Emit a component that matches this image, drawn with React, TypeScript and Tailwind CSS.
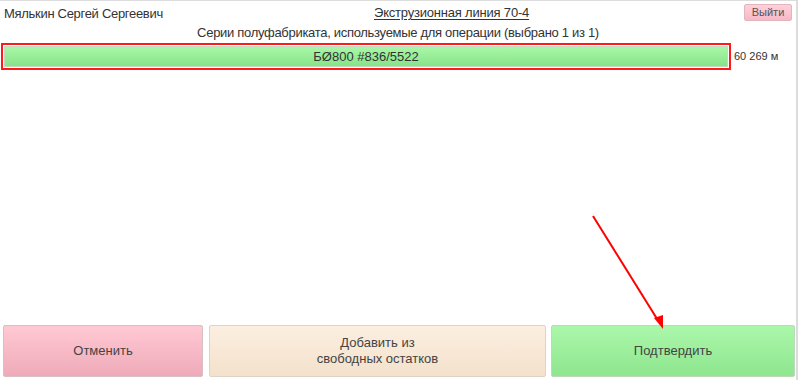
import React from "react";

export default function App() {
  return (
    <div
      className="relative w-[800px] h-[380px] bg-white overflow-hidden text-[#333]"
      style={{ fontFamily: '"Liberation Sans", Arial, sans-serif' }}
    >
      <div className="w-[798px] h-[380px] border-t border-r-2 border-[#dcdcdc] flex flex-col">
        {/* header */}
        <div className="relative h-[24px] flex items-center">
          <div className="pl-[4px] text-[13px] leading-none tracking-[-0.3px]">Мялькин Сергей Сергеевич</div>
          <div className="absolute left-[374px] top-[5px] text-[13px] leading-none tracking-[-0.2px] underline underline-offset-2">
            Экструзионная линия 70-4
          </div>
          <button className="absolute right-[4px] top-[3px] w-[48px] h-[17px] rounded-[2px] border border-[#e3b6be] bg-gradient-to-b from-[#ffd0da] to-[#f6b8c6] text-[11px] leading-none text-[#555]">
            Выйти
          </button>
        </div>
        <div className="h-[18px] text-center text-[13px] leading-[18px] -mt-[1px] tracking-[-0.3px]">
          Серии полуфабриката, используемые для операции (выбрано 1 из 1)
        </div>
        <div className="mt-[1px] flex items-center">
          <div className="ml-[1px] w-[730px] h-[27px] border-2 border-[#ff1a1a] p-[1px]">
            <div className="h-full border border-[#c2d8c2] bg-gradient-to-b from-[#a8f7a8] to-[#88e488] flex items-center justify-center text-[13px]">
              БØ800 #836/5522
            </div>
          </div>
          <div className="ml-[3px] text-[11px]">60 269 м</div>
        </div>
        <div className="flex-1" />
        <div className="flex items-stretch h-[52px] mb-[3px] pl-[3px] text-[13px] text-[#444]">
          <button className="w-[200px] border border-[#d7c0c4] rounded-[2px] bg-gradient-to-b from-[#ffc9d4] to-[#efaab9]">
            Отменить
          </button>
          <button className="ml-[6px] w-[337px] border border-[#ddd3c6] rounded-[2px] bg-gradient-to-b from-[#fcefe1] to-[#f3e1cb] leading-[16px]">
            Добавить из
            <br />
            свободных остатков
          </button>
          <button className="ml-[5px] w-[244px] border border-[#bcd9bc] rounded-[2px] bg-gradient-to-b from-[#abf7ab] to-[#8ee68e]">
            Подтвердить
          </button>
        </div>
      </div>
      <svg className="absolute left-0 top-0 pointer-events-none" width="800" height="380">
        <line x1="593" y1="216" x2="659" y2="322" stroke="#ff0000" strokeWidth="2" />
        <polygon points="663,329 654,318 663,315" fill="#ff0000" />
      </svg>
    </div>
  );
}
